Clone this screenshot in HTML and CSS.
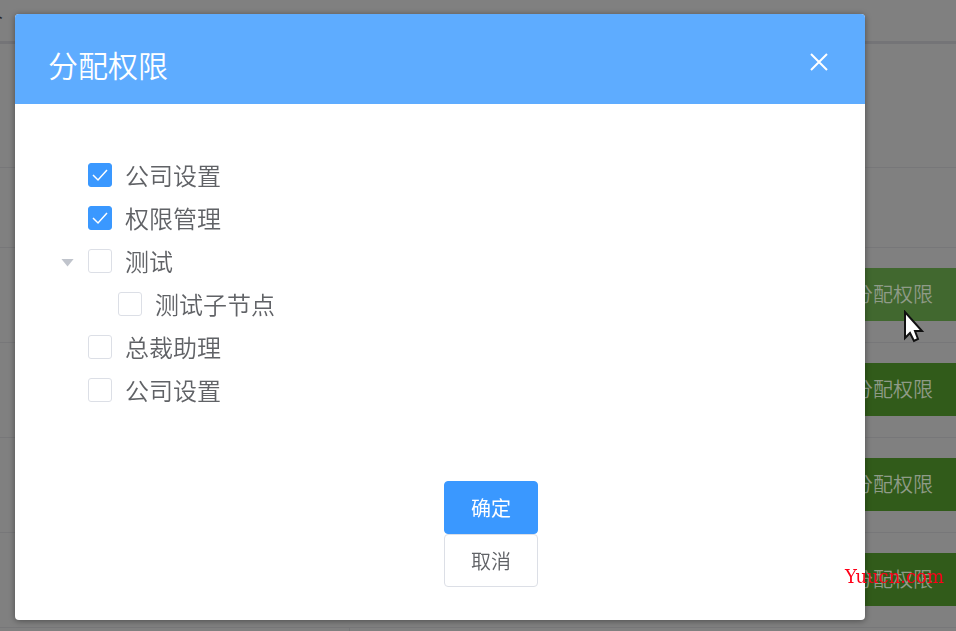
FILE: index.html
```html
<!DOCTYPE html>
<html lang="zh-CN">
<head>
    <meta charset="UTF-8">
    <meta name="viewport" content="width=device-width, initial-scale=1.0">
    <title>分配权限</title>
    <link rel="stylesheet" href="styles.css">
</head>
<body>
    <div class="page">
        <div class="tabs"><span class="tab">人</span></div>
        <div class="toolbar"></div>
        <table class="roles">
            <thead>
                <tr><th></th><th class="col-action"></th></tr>
            </thead>
            <tbody>
                <tr><td></td><td><button type="button" class="btn-assign active">分配权限</button></td></tr>
                <tr><td></td><td><button type="button" class="btn-assign">分配权限</button></td></tr>
                <tr><td></td><td><button type="button" class="btn-assign">分配权限</button></td></tr>
                <tr><td></td><td><button type="button" class="btn-assign">分配权限</button></td></tr>
            </tbody>
        </table>
        <div class="pager"></div>
    </div>

    <div class="overlay">
        <div class="dialog" role="dialog" aria-labelledby="dialogTitle">
            <div class="dialog-header">
                <h1 id="dialogTitle">分配权限</h1>
                <button type="button" class="btn-close" aria-label="关闭">
                    <svg width="20" height="20" viewBox="0 0 20 20"><path d="M2 2L18 18M18 2L2 18"/></svg>
                </button>
            </div>
            <div class="dialog-body">
                <ul class="tree">
                    <li>
                        <label class="node"><input type="checkbox" checked>公司设置</label>
                    </li>
                    <li>
                        <label class="node"><input type="checkbox" checked>权限管理</label>
                    </li>
                    <li>
                        <div class="branch">
                            <button type="button" class="toggle" aria-label="收起"></button>
                            <label class="node"><input type="checkbox">测试</label>
                        </div>
                        <ul>
                            <li>
                                <label class="node"><input type="checkbox">测试子节点</label>
                            </li>
                        </ul>
                    </li>
                    <li>
                        <label class="node"><input type="checkbox">总裁助理</label>
                    </li>
                    <li>
                        <label class="node"><input type="checkbox">公司设置</label>
                    </li>
                </ul>
                <div class="actions">
                    <button type="button" class="btn btn-primary">确定</button>
                    <button type="button" class="btn">取消</button>
                </div>
            </div>
        </div>
    </div>

    <svg class="cursor" width="22" height="34" viewBox="0 0 22 34">
        <path d="M2 2V28L7 23L11 31L15 29L12 21H19Z"/>
    </svg>
    <span class="watermark">Yuucn.com</span>
</body>
</html>
```

FILE: styles.css
```css
* {
    box-sizing: border-box;
}
body {
    margin: 0;
    overflow: hidden;
    background-color: #808080;
    font-family: "Noto Sans CJK SC", sans-serif;
    font-weight: 350;
}
button {
    font-family: inherit;
    font-weight: inherit;
    cursor: pointer;
}

/* page behind the dialog */
.page {
    height: 100vh;
    overflow: hidden;
}
.tabs {
    display: flex;
    height: 44px;
    border-bottom: 3px solid #747477;
}
.tab {
    display: flex;
    justify-content: flex-end;
    width: 3px;
    overflow: hidden;
    font-size: 20px;
    line-height: 20px;
    color: #222;
}
.toolbar {
    height: 124px;
    border-bottom: 1px solid #777779;
}
.roles {
    width: 100%;
    table-layout: fixed;
    border-collapse: separate;
    border-spacing: 0;
}
.roles th,
.roles td {
    padding: 0;
    border-bottom: 1px solid #777779;
}
.roles th {
    height: 80px;
}
.roles td {
    height: 95px;
    padding-bottom: 2px;
}
.roles .col-action {
    width: 132px;
}
.btn-assign {
    display: block;
    width: 138px;
    height: 53px;
    padding: 0 0 2px;
    border: none;
    border-radius: 4px;
    font-size: 20px;
    color: #8f9b88;
    background-color: #315b1a;
}
.btn-assign.active {
    background-color: #41682f;
}
.pager {
    width: 350px;
    height: 20px;
    border-right: 1px solid #777779;
}

/* dialog */
.overlay {
    position: fixed;
    inset: 0;
    padding: 14px 91px 11px 15px;
}
.dialog {
    border-radius: 4px;
    overflow: hidden;
    background-color: #fff;
    box-shadow: 0 1px 6px rgba(0, 0, 0, 0.4);
}
.dialog-header {
    display: flex;
    justify-content: space-between;
    align-items: center;
    height: 90px;
    padding: 10px 36px 0 33px;
    color: #fff;
    background-color: #5eacff;
}
.dialog-header h1 {
    margin: 0;
    font-size: 30px;
    font-weight: inherit;
    line-height: 44px;
}
.btn-close {
    display: flex;
    padding: 0 0 4px;
    border: none;
    background: none;
}
.btn-close svg {
    fill: none;
    stroke: #fff;
    stroke-width: 2;
}
.dialog-body {
    padding: 49px 43px 33px;
}
.tree,
.tree ul {
    margin: 0;
    padding: 0 0 0 30px;
    list-style: none;
}
.node {
    display: flex;
    align-items: center;
    gap: 13px;
    height: 43px;
    font-size: 24px;
    line-height: 32px;
    color: #606266;
}
.node input {
    appearance: none;
    width: 24px;
    height: 24px;
    margin: 0;
    border: 1px solid #dcdfe6;
    border-radius: 3px;
    background-color: #fff;
}
.node input:checked {
    border-color: #3a98ff;
    background: #3a98ff url("data:image/svg+xml,%3Csvg xmlns='http://www.w3.org/2000/svg' viewBox='0 0 22 22'%3E%3Cpath d='M4 11L9 16L18 6' fill='none' stroke='white' stroke-width='1.500'/%3E%3C/svg%3E") center / 22px no-repeat;
}
.branch {
    display: flex;
    align-items: center;
    margin-left: -27px;
}
.toggle {
    width: 13px;
    height: 8px;
    margin: 4px 14px 0 0;
    padding: 0;
    border: none;
    background-color: #c0c4cc;
    clip-path: polygon(0 0, 100% 0, 50% 100%);
}
.actions {
    display: flex;
    flex-direction: column;
    align-items: center;
    padding: 70px 0 0 102px;
}
.btn {
    width: 94px;
    height: 53px;
    padding: 0;
    border: 1px solid #dcdfe6;
    border-radius: 4px;
    font-size: 20px;
    color: #606266;
    background-color: #fff;
}
.btn-primary {
    border-color: #3a98ff;
    font-weight: 400;
    color: #fff;
    background-color: #3a98ff;
}

.cursor {
    position: absolute;
    top: 310px;
    left: 903px;
    fill: #fff;
    stroke: #111;
    stroke-width: 2;
}
.watermark {
    position: absolute;
    right: 12px;
    bottom: 44px;
    font-family: "DejaVu Serif", serif;
    font-size: 18px;
    font-weight: 400;
    line-height: 20px;
    color: #ff0018;
}
```
